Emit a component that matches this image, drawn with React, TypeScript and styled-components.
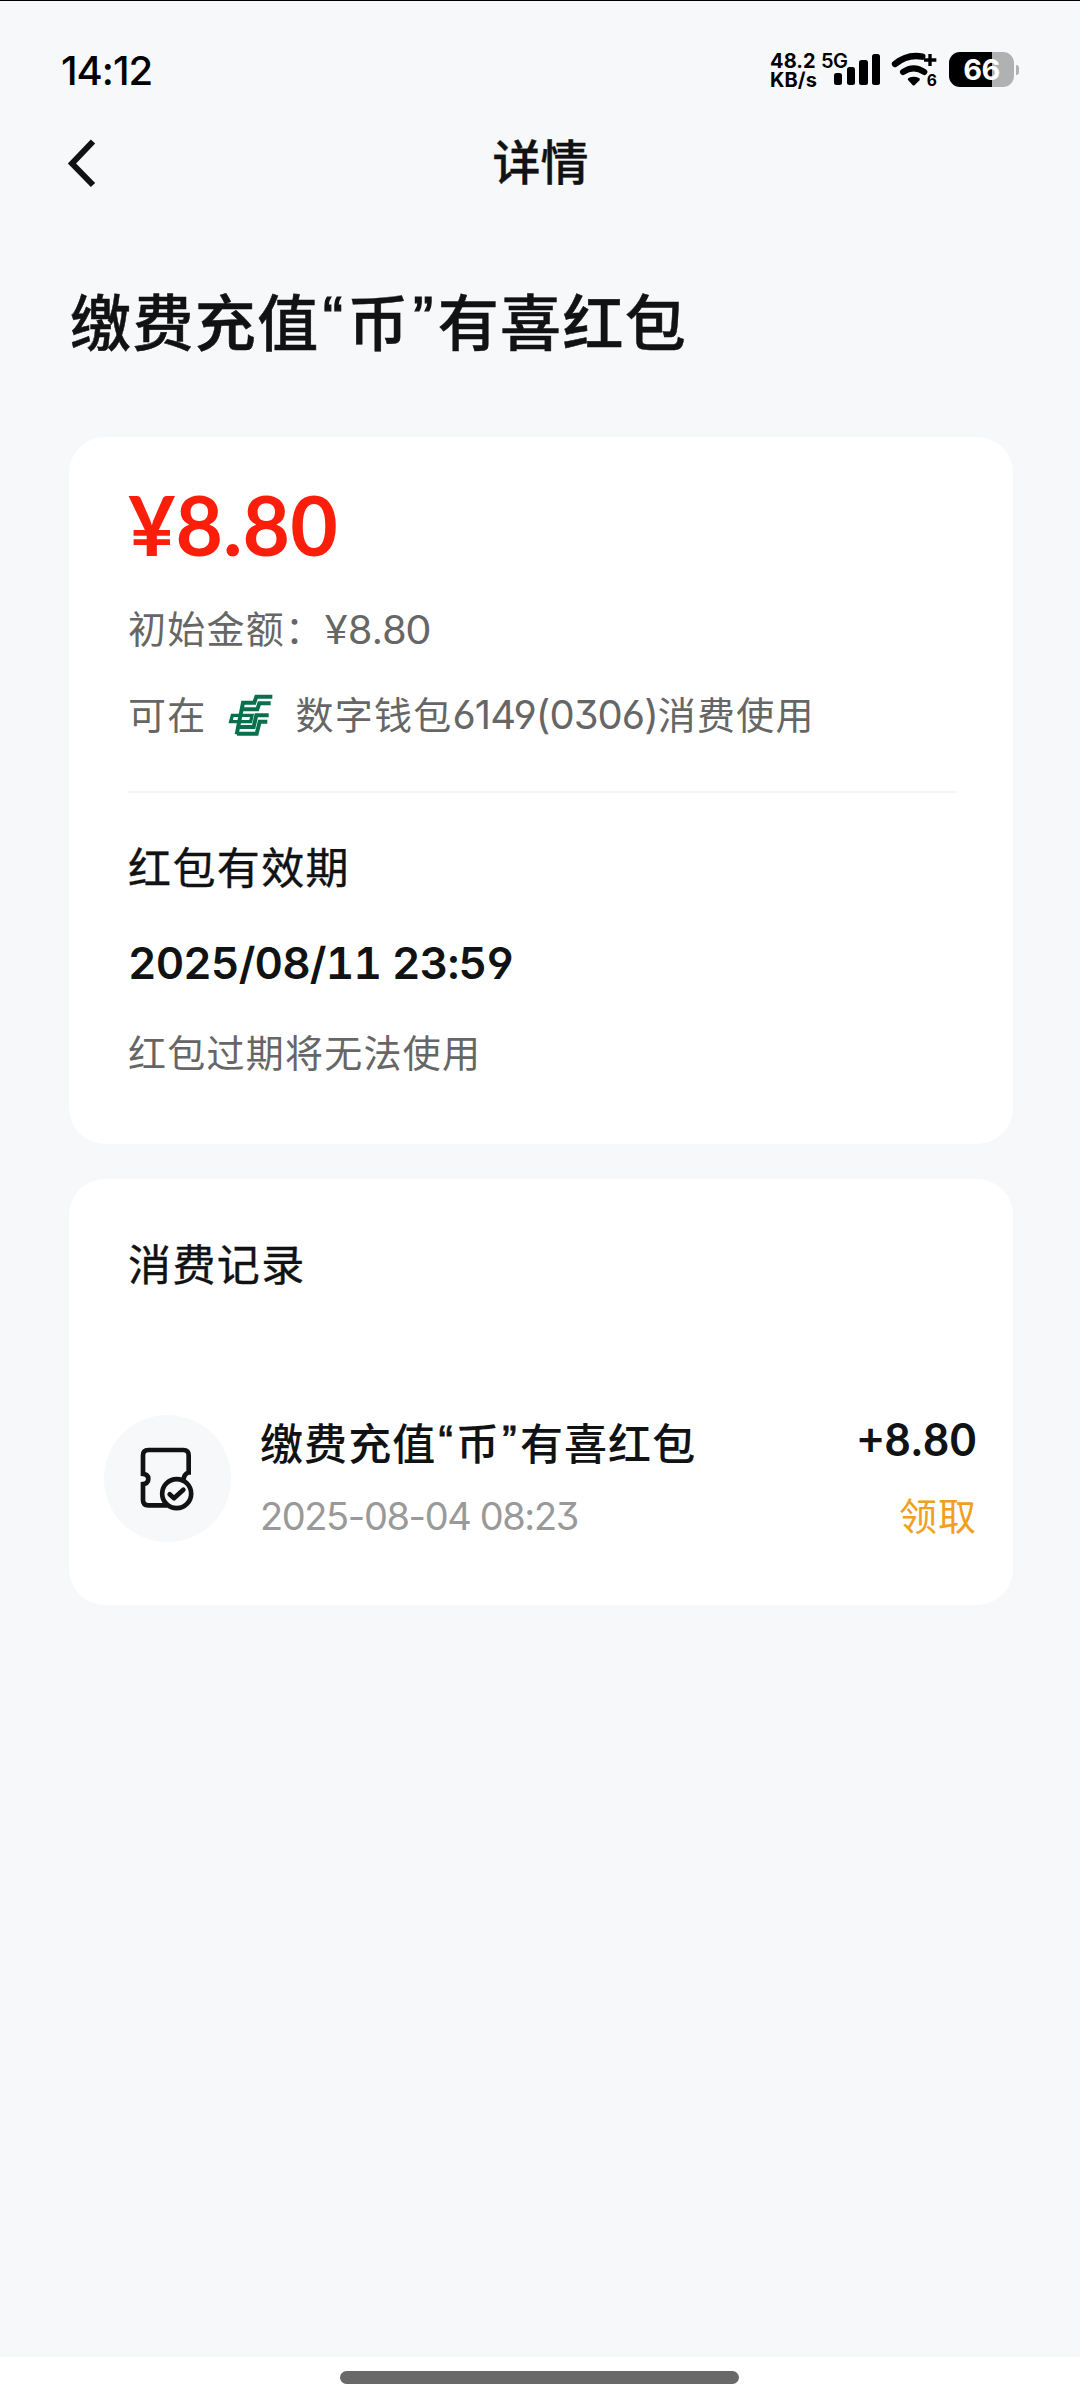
import React from "react";
import styled, { createGlobalStyle } from "styled-components";

const GlobalStyle = createGlobalStyle`
  body { margin: 0; background: #f7f8fa; }
  * { box-sizing: border-box; }
`;

const Screen = styled.div`
  width: 1080px;
  height: 2400px;
  display: flex;
  flex-direction: column;
  background: #f7f8fa;
  border-top: 1px solid #000;
  color: #111213;
  font-family: Inter, "Noto Sans CJK SC", sans-serif;
  white-space: nowrap;
  overflow: hidden;
`;

const StatusBar = styled.header`
  height: 102px;
  padding: 50px 61px 0 61px;
  display: flex;
  justify-content: space-between;
  align-items: flex-start;
  color: #000;
`;

const Clock = styled.time`
  font-size: 40px;
  line-height: 40px;
  font-weight: 500;
  letter-spacing: -1px;
`;

const StatusIcons = styled.div`
  display: flex;
  align-items: flex-start;
  padding-top: 1px;
`;

const NetSpeed = styled.div`
  width: 51px;
  display: flex;
  flex-direction: column;
  font-size: 20px;
  line-height: 19px;
  font-weight: 700;
  letter-spacing: 0.1px;
`;

const NetType = styled.span`
  width: 13px;
  font-size: 20px;
  line-height: 19px;
  font-weight: 600;
  letter-spacing: -0.6px;
`;

const Signal = styled.div`
  display: flex;
  align-items: flex-end;
  gap: 4.5px;
  height: 33px;
  width: 57px;
`;

const SignalBar = styled.i<{ $height: number }>`
  width: 8.2px;
  height: ${(p) => p.$height}px;
  border-radius: 2.5px;
  background: #000;
`;

const Battery = styled.div`
  display: flex;
  align-items: center;
  gap: 2px;
  margin-left: 11px;
`;

const BatteryBody = styled.div`
  width: 65px;
  height: 35px;
  border-radius: 11px;
  background: linear-gradient(to right, #000 66%, #b0b1b2 66%);
  color: #fff;
  font-size: 29px;
  line-height: 35px;
  font-weight: 700;
  text-align: center;
  letter-spacing: -0.5px;
`;

const BatteryTip = styled.i`
  width: 3px;
  height: 10px;
  border-radius: 0 3px 3px 0;
  background: #b0b1b2;
`;

const NavBar = styled.nav`
  height: 120px;
  display: grid;
  grid-template-columns: 1fr auto 1fr;
  align-items: center;
  padding: 0 65px 0 66px;
`;

const BackButton = styled.button`
  justify-self: start;
  width: 32px;
  height: 50px;
  padding: 0;
  border: 0;
  background: none;
  color: #111213;
`;

const NavTitle = styled.h1`
  margin: 0;
  font-size: 48px;
  line-height: 60px;
  font-weight: 500;
  -webkit-text-stroke: 0.3px currentColor;
`;

const PageTitle = styled.h2`
  margin: 59px 0 0 70px;
  height: 84px;
  font-size: 61px;
  line-height: 84px;
  font-weight: 500;
  letter-spacing: 1.4px;
  -webkit-text-stroke: 0.5px currentColor;
`;

const Quote = styled.span`
  padding: 0 0.05em;
  font-family: "Liberation Sans", sans-serif;
  font-weight: 400;
  line-height: 0;
  vertical-align: 0.12em;
  -webkit-text-stroke: 0.02em currentColor;
`;

const Cards = styled.main`
  flex: 1;
  display: flex;
  flex-direction: column;
  gap: 35px;
  padding: 71px 67px 0 69px;
`;

const Card = styled.section<{ $height: number; $top: number }>`
  height: ${(p) => p.$height}px;
  padding-top: ${(p) => p.$top}px;
  border-radius: 36px;
  background: #fff;
`;

const Details = styled.div`
  padding: 0 56px 0 59px;
`;

const Price = styled.div`
  font-family: Lato, sans-serif;
  font-size: 82px;
  line-height: 80px;
  font-weight: 700;
  color: #fb1f0b;
`;

const Line = styled.div<{ $gap: number }>`
  display: flex;
  align-items: center;
  margin-top: ${(p) => p.$gap}px;
  font-size: 38px;
  line-height: 54px;
  letter-spacing: 1.25px;
  color: #666;
`;

const Amount = styled.span`
  font-family: Lato, sans-serif;
  font-size: 41px;
  letter-spacing: 0.3px;
`;

const WalletNumber = styled.span`
  font-size: 40px;
  letter-spacing: -0.95px;
  font-feature-settings: "cv03", "cv04", "cv09";
`;

const BankLogo = styled.svg`
  width: 46px;
  height: 44px;
  margin: 0 22px 0 21px;
`;

const Divider = styled.hr`
  height: 2px;
  margin: 49px 0 0;
  border: 0;
  background: #f5f5f6;
`;

const Heading = styled.h3<{ $gap?: number }>`
  margin: ${(p) => p.$gap ?? 0}px 0 0;
  font-size: 43px;
  line-height: 60px;
  font-weight: 400;
  letter-spacing: 1.4px;
  -webkit-text-stroke: 0.4px currentColor;
`;

const ExpiryDate = styled.div`
  margin-top: 41px;
  font-size: 44px;
  line-height: 48px;
  font-weight: 600;
  letter-spacing: -0.8px;
  font-feature-settings: "tnum", "cv03", "cv04";
`;

const Record = styled.div`
  display: flex;
  align-items: flex-start;
  margin-top: 120px;
  padding: 0 36px 0 35px;
`;

const IconCircle = styled.div`
  width: 127px;
  height: 127px;
  border-radius: 50%;
  background: #f7f8fa;
  margin-right: 29px;
`;

const RecordColumn = styled.div<{ $end?: boolean }>`
  display: flex;
  flex-direction: column;
  flex: ${(p) => (p.$end ? "none" : 1)};
  align-items: ${(p) => (p.$end ? "flex-end" : "flex-start")};
`;

const RecordTitle = styled.div`
  margin-top: 2px;
  font-size: 43px;
  line-height: 54px;
  font-weight: 500;
  letter-spacing: 1.1px;
`;

const RecordTime = styled.time`
  margin-top: 21px;
  font-size: 38px;
  line-height: 48px;
  color: #999;
  letter-spacing: -1.4px;
  font-feature-settings: "cv03", "cv04", "cv09";
`;

const RecordAmount = styled.div`
  font-family: Lato, sans-serif;
  font-size: 45px;
  line-height: 48px;
  font-weight: 700;
  letter-spacing: 0.9px;
`;

const RecordState = styled.div`
  margin-top: 29px;
  font-size: 38px;
  line-height: 48px;
  letter-spacing: 1px;
  color: #f0a020;
`;

const HomeArea = styled.footer`
  height: 43px;
  background: #fff;
  padding: 14px 1px 0 0;
`;

const HomePill = styled.div`
  width: 399px;
  height: 13px;
  margin: 0 auto;
  border-radius: 7px;
  background: #696969;
`;

const WifiSvg = styled.svg`
  overflow: visible;
`;

const BARS = [12, 18, 25, 31];

const WifiIcon = () => (
  <WifiSvg width="47" height="35" viewBox="450 66 141 105" fill="none" stroke="#000">
    <path d="M462 102Q500 71 544 80" strokeWidth="19" strokeLinecap="round" />
    <path d="M486 126Q518 104 550 126" strokeWidth="18" strokeLinecap="round" />
    <path d="M505 148Q518 141 532 148L518 162Z" fill="#000" strokeWidth="9" strokeLinejoin="round" />
    <path d="M549 90H586M567 72V108" strokeWidth="10" />
    <text x="557" y="169" fontSize="47" fontWeight="700" fill="#000" stroke="none">6</text>
  </WifiSvg>
);

const TicketIcon = () => (
  <svg width="127" height="127" viewBox="42 43 381 381" fill="none" stroke="#111213" strokeWidth="14">
    <path d="M152 215H159V164Q159 148 175 148H280Q296 148 296 164V215H303M296 215Q281 221 281 237M152 219Q175 219 175 235Q175 251 152 251M159 249V298Q159 314 175 314H232" />
    <circle cx="260" cy="279" r="43.5" fill="#f7f8fa" />
    <path d="M239 281L252 293L280 267" strokeLinecap="round" strokeLinejoin="round" />
  </svg>
);

const Logo = () => (
  <BankLogo viewBox="54 36 138 132" fill="none" stroke="#08704d" strokeWidth="12">
    <path d="M187 47H139L133 65H99L80 160" />
    <path d="M182 67H148L142 85H94" />
    <path d="M176 103H139L131 138H86" />
    <path d="M172 122H149L140 158H81" />
    <path d="M126 103H67L62 122H122Z" strokeWidth="10" />
  </BankLogo>
);

const CampaignName = () => (
  <>
    缴费充值<Quote>“</Quote>币<Quote>”</Quote>有喜红包
  </>
);

export default function App() {
  return (
    <>
      <GlobalStyle />
      <Screen>
        <StatusBar>
          <Clock>14:12</Clock>
          <StatusIcons>
            <NetSpeed>
              <span>48.2</span>
              <span>KB/s</span>
            </NetSpeed>
            <NetType>5G</NetType>
            <Signal>
              {BARS.map((h) => <SignalBar key={h} $height={h} />)}
            </Signal>
            <WifiIcon />
            <Battery>
              <BatteryBody>66</BatteryBody>
              <BatteryTip />
            </Battery>
          </StatusIcons>
        </StatusBar>
        <NavBar>
          <BackButton aria-label="返回">
            <svg width="32" height="50" viewBox="0 0 32 50" fill="none" stroke="currentColor" strokeWidth="6">
              <path d="M27 3.5L6 25.5L27 47" />
            </svg>
          </BackButton>
          <NavTitle>详情</NavTitle>
        </NavBar>
        <PageTitle><CampaignName /></PageTitle>
        <Cards>
          <Card $height={707} $top={47}>
            <Details>
              <Price>¥8.80</Price>
              <Line $gap={38}>
                初始金额：<Amount>¥8.80</Amount>
              </Line>
              <Line $gap={32}>
                可在<Logo />数字钱包
                <WalletNumber>6149(0306)</WalletNumber>消费使用
              </Line>
              <Divider />
              <Heading $gap={45}>红包有效期</Heading>
              <ExpiryDate>2025/08/11 23:59</ExpiryDate>
              <Line $gap={39}>红包过期将无法使用</Line>
            </Details>
          </Card>
          <Card $height={426} $top={56}>
            <Details>
              <Heading>消费记录</Heading>
            </Details>
            <Record>
              <IconCircle><TicketIcon /></IconCircle>
              <RecordColumn>
                <RecordTitle><CampaignName /></RecordTitle>
                <RecordTime>2025-08-04 08:23</RecordTime>
              </RecordColumn>
              <RecordColumn $end>
                <RecordAmount>+8.80</RecordAmount>
                <RecordState>领取</RecordState>
              </RecordColumn>
            </Record>
          </Card>
        </Cards>
        <HomeArea><HomePill /></HomeArea>
      </Screen>
    </>
  );
}
